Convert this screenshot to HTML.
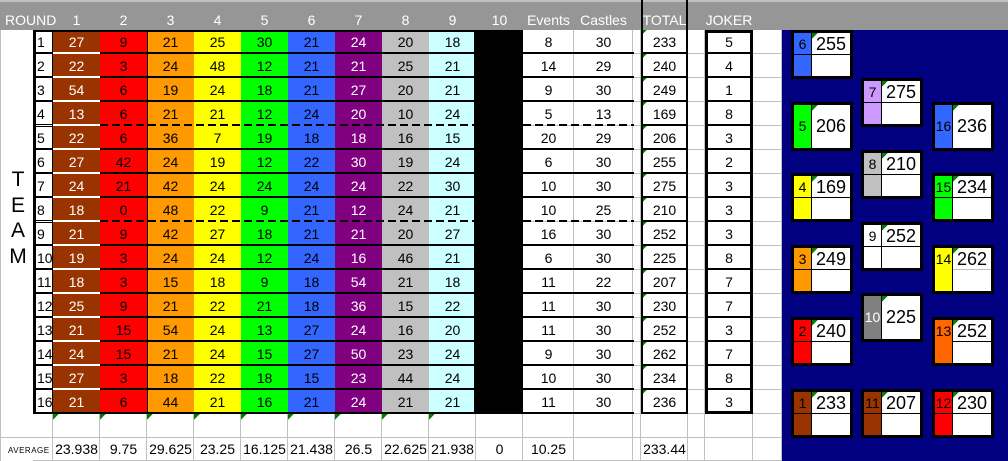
<!DOCTYPE html>
<html><head><meta charset="utf-8">
<style>
*{margin:0;padding:0;box-sizing:border-box}
body{width:1008px;height:461px;position:relative;overflow:hidden;background:#fff;font-family:"Liberation Sans",Arial,sans-serif}
.hd{position:absolute;left:0;top:0;width:1008px;height:30px;background:#969696;border-top:2px solid #c0c0c0}
.ht{position:absolute;top:11px;color:#fff;font-size:14px;text-align:center;line-height:18px}
table{position:absolute;left:33px;top:30px;border-collapse:collapse;table-layout:fixed;font-size:14px}
tr{height:24px}
td{padding:0;height:24px;max-height:24px;text-align:center;line-height:24px;overflow:hidden;white-space:nowrap;vertical-align:middle}
tr.r td:nth-child(1){background:#fff;text-align:left;padding-left:4px}
tr.r td:nth-child(2){background:#993300;color:#fff}
tr.r td:nth-child(3){background:#ff0000}
tr.r td:nth-child(4){background:#ff9900}
tr.r td:nth-child(5){background:#ffff00}
tr.r td:nth-child(6){background:#00ff00}
tr.r td:nth-child(7){background:#3366ff}
tr.r td:nth-child(8){background:#800080;color:#fff}
tr.r td:nth-child(9){background:#c0c0c0}
tr.r td:nth-child(10){background:#ccffff}
tr.r td:nth-child(11){background:#000}
tr.r td:nth-child(12),tr.r td:nth-child(13),tr.r td:nth-child(14),tr.r td:nth-child(16),tr.r td:nth-child(18){box-shadow:inset -1px 0 #c0c0c0,inset 0 -1px #c0c0c0}
tr.r td:nth-child(15){background:linear-gradient(135deg,#008000 0 4px,transparent 4px)}
tr.e td,tr.a td{box-shadow:inset -1px 0 #c0c0c0,inset 0 -1px #c0c0c0}
tr.e td.g{background:linear-gradient(135deg,#008000 0 4px,transparent 4px)}
tr.a{height:23px}
tr.a td{height:23px;line-height:23px}
.o{position:absolute}
.bx{position:absolute;width:62px;height:49px;border:3px solid #000;background:#fff;font-size:14px}
.bx .l{position:absolute;left:0;top:0;width:18px;height:43px;border-right:1px solid #000;text-align:center;line-height:22px}
.bx .v{position:absolute;left:18px;right:0;top:0;height:21px;line-height:23px;font-size:18px;text-align:center;background:linear-gradient(135deg,#008000 0 4px,transparent 4px)}
.bx .m{position:absolute;left:0;right:0;top:21px;height:1px;background:#000}
.bx.c .l{line-height:43px}
.bx.c .v{height:43px;line-height:43px}
</style></head><body>
<div class="hd"></div>
<div class="ht" style="left:5px">ROUND</div>
<div class="ht" style="left:53px;width:47px">1</div>
<div class="ht" style="left:100px;width:47px">2</div>
<div class="ht" style="left:147px;width:47px">3</div>
<div class="ht" style="left:194px;width:47px">4</div>
<div class="ht" style="left:241px;width:47px">5</div>
<div class="ht" style="left:288px;width:47px">6</div>
<div class="ht" style="left:335px;width:47px">7</div>
<div class="ht" style="left:382px;width:47px">8</div>
<div class="ht" style="left:429px;width:47px">9</div>
<div class="ht" style="left:476px;width:47px">10</div>
<div class="ht" style="left:523px;width:51px">Events</div>
<div class="ht" style="left:574px;width:59px">Castles</div>
<div class="ht" style="left:641px;width:47px">TOTAL</div>
<div class="ht" style="left:705px;width:48px">JOKER</div>

<div class="o" style="left:782px;top:30px;width:226px;height:431px;background:#000080"></div>
<div class="o" style="left:0;top:30px;width:1px;height:431px;background:#c0c0c0"></div>
<div class="o" style="left:0;top:437px;width:33px;height:1px;background:#c0c0c0"></div>

<table>
<colgroup><col style="width:20px"><col style="width:47px"><col style="width:47px"><col style="width:47px"><col style="width:47px"><col style="width:47px"><col style="width:47px"><col style="width:47px"><col style="width:47px"><col style="width:47px"><col style="width:47px"><col style="width:51px"><col style="width:59px"><col style="width:8px"><col style="width:47px"><col style="width:17px"><col style="width:48px"><col style="width:29px"></colgroup>
<tr class="r"><td>1</td><td>27</td><td>9</td><td>21</td><td>25</td><td>30</td><td>21</td><td>24</td><td>20</td><td>18</td><td></td><td>8</td><td>30</td><td></td><td>233</td><td></td><td>5</td><td></td></tr>
<tr class="r"><td>2</td><td>22</td><td>3</td><td>24</td><td>48</td><td>12</td><td>21</td><td>21</td><td>25</td><td>21</td><td></td><td>14</td><td>29</td><td></td><td>240</td><td></td><td>4</td><td></td></tr>
<tr class="r"><td>3</td><td>54</td><td>6</td><td>19</td><td>24</td><td>18</td><td>21</td><td>27</td><td>20</td><td>21</td><td></td><td>9</td><td>30</td><td></td><td>249</td><td></td><td>1</td><td></td></tr>
<tr class="r"><td>4</td><td>13</td><td>6</td><td>21</td><td>21</td><td>12</td><td>24</td><td>20</td><td>10</td><td>24</td><td></td><td>5</td><td>13</td><td></td><td>169</td><td></td><td>8</td><td></td></tr>
<tr class="r"><td>5</td><td>22</td><td>6</td><td>36</td><td>7</td><td>19</td><td>18</td><td>18</td><td>16</td><td>15</td><td></td><td>20</td><td>29</td><td></td><td>206</td><td></td><td>3</td><td></td></tr>
<tr class="r"><td>6</td><td>27</td><td>42</td><td>24</td><td>19</td><td>12</td><td>22</td><td>30</td><td>19</td><td>24</td><td></td><td>6</td><td>30</td><td></td><td>255</td><td></td><td>2</td><td></td></tr>
<tr class="r"><td>7</td><td>24</td><td>21</td><td>42</td><td>24</td><td>24</td><td>24</td><td>24</td><td>22</td><td>30</td><td></td><td>10</td><td>30</td><td></td><td>275</td><td></td><td>3</td><td></td></tr>
<tr class="r"><td>8</td><td>18</td><td>0</td><td>48</td><td>22</td><td>9</td><td>21</td><td>12</td><td>24</td><td>21</td><td></td><td>10</td><td>25</td><td></td><td>210</td><td></td><td>3</td><td></td></tr>
<tr class="r"><td>9</td><td>21</td><td>9</td><td>42</td><td>27</td><td>18</td><td>21</td><td>21</td><td>20</td><td>27</td><td></td><td>16</td><td>30</td><td></td><td>252</td><td></td><td>3</td><td></td></tr>
<tr class="r"><td>10</td><td>19</td><td>3</td><td>24</td><td>24</td><td>12</td><td>24</td><td>16</td><td>46</td><td>21</td><td></td><td>6</td><td>30</td><td></td><td>225</td><td></td><td>8</td><td></td></tr>
<tr class="r"><td>11</td><td>18</td><td>3</td><td>15</td><td>18</td><td>9</td><td>18</td><td>54</td><td>21</td><td>18</td><td></td><td>11</td><td>22</td><td></td><td>207</td><td></td><td>7</td><td></td></tr>
<tr class="r"><td>12</td><td>25</td><td>9</td><td>21</td><td>22</td><td>21</td><td>18</td><td>36</td><td>15</td><td>22</td><td></td><td>11</td><td>30</td><td></td><td>230</td><td></td><td>7</td><td></td></tr>
<tr class="r"><td>13</td><td>21</td><td>15</td><td>54</td><td>24</td><td>13</td><td>27</td><td>24</td><td>16</td><td>20</td><td></td><td>11</td><td>30</td><td></td><td>252</td><td></td><td>3</td><td></td></tr>
<tr class="r"><td>14</td><td>24</td><td>15</td><td>21</td><td>24</td><td>15</td><td>27</td><td>50</td><td>23</td><td>24</td><td></td><td>9</td><td>30</td><td></td><td>262</td><td></td><td>7</td><td></td></tr>
<tr class="r"><td>15</td><td>27</td><td>3</td><td>18</td><td>22</td><td>18</td><td>15</td><td>23</td><td>44</td><td>24</td><td></td><td>10</td><td>30</td><td></td><td>234</td><td></td><td>8</td><td></td></tr>
<tr class="r"><td>16</td><td>21</td><td>6</td><td>44</td><td>21</td><td>16</td><td>21</td><td>24</td><td>21</td><td>21</td><td></td><td>11</td><td>30</td><td></td><td>236</td><td></td><td>3</td><td></td></tr>
<tr class="e"><td></td><td class="g"></td><td class="g"></td><td class="g"></td><td class="g"></td><td class="g"></td><td class="g"></td><td class="g"></td><td class="g"></td><td class="g"></td><td></td><td></td><td></td><td></td><td></td><td></td><td></td><td></td></tr>
<tr class="a"><td></td><td>23.938</td><td>9.75</td><td>29.625</td><td>23.25</td><td>16.125</td><td>21.438</td><td>26.5</td><td>22.625</td><td>21.938</td><td>0</td><td>10.25</td><td></td><td></td><td>233.44</td><td></td><td></td><td></td></tr>
</table>

<div class="o" style="left:8px;top:446px;font-size:8px;letter-spacing:0.5px">AVERAGE</div>

<div class="o" style="left:33px;top:30px;width:601px;height:94px;background:repeating-linear-gradient(to bottom,transparent 0 22px,#000 22px 24px)"></div>
<div class="o" style="left:33px;top:126px;width:601px;height:94px;background:repeating-linear-gradient(to bottom,transparent 0 22px,#000 22px 24px)"></div>
<div class="o" style="left:33px;top:222px;width:601px;height:192px;background:repeating-linear-gradient(to bottom,transparent 0 22px,#000 22px 24px)"></div>
<div class="o" style="left:476px;top:30px;width:47px;height:384px;background:#000"></div>
<div class="o" style="left:53px;top:30px;width:47px;height:382px;background:repeating-linear-gradient(to bottom,transparent 0 22px,#fff 22px 24px)"></div>
<div class="o" style="left:33px;top:124px;width:20px;height:1px;background:#000"></div>
<div class="o" style="left:33px;top:126px;width:20px;height:1px;background:#000"></div>
<div class="o" style="left:33px;top:220px;width:20px;height:1px;background:#000"></div>
<div class="o" style="left:33px;top:222px;width:20px;height:1px;background:#000"></div>
<div class="o" style="left:100px;top:124px;width:376px;height:2px;background:repeating-linear-gradient(to right,#000 0 8px,transparent 8px 12px)"></div>
<div class="o" style="left:523px;top:124px;width:111px;height:2px;background:repeating-linear-gradient(to right,#000 0 8px,transparent 8px 12px)"></div>
<div class="o" style="left:100px;top:220px;width:376px;height:2px;background:repeating-linear-gradient(to right,#000 0 8px,transparent 8px 12px)"></div>
<div class="o" style="left:523px;top:220px;width:111px;height:2px;background:repeating-linear-gradient(to right,#000 0 8px,transparent 8px 12px)"></div>
<div class="o" style="left:33px;top:30px;width:443px;height:384px;border:2px solid #000;border-left-width:3px"></div>
<div class="o" style="left:52px;top:30px;width:1px;height:384px;background:#000"></div>
<div class="o" style="left:147px;top:30px;width:1px;height:384px;background:#000"></div>
<div class="o" style="left:641px;top:30px;width:47px;height:384px;background:repeating-linear-gradient(to bottom,transparent 0 22px,#000 22px 24px)"></div>
<div class="o" style="left:641px;top:0;width:47px;height:414px;border-left:2px solid #000;border-right:2px solid #000"></div>
<div class="o" style="left:705px;top:30px;width:48px;height:384px;background:repeating-linear-gradient(to bottom,transparent 0 22px,#000 22px 24px)"></div>
<div class="o" style="left:705px;top:30px;width:48px;height:384px;border:3px solid #000"></div>

<div class="o" style="left:7px;top:168px;width:22px;text-align:center;font-size:21px;line-height:24px">T</div>
<div class="o" style="left:7px;top:194px;width:22px;text-align:center;font-size:21px;line-height:24px">E</div>
<div class="o" style="left:7px;top:219px;width:22px;text-align:center;font-size:21px;line-height:24px">A</div>
<div class="o" style="left:7px;top:245px;width:22px;text-align:center;font-size:21px;line-height:24px">M</div>

<div class="bx" style="left:791px;top:30px"><div class="l" style="background:#3366ff">6</div><div class="v">255</div><div class="m"></div></div>
<div class="bx c" style="left:791px;top:102px"><div class="l" style="background:#00ff00">5</div><div class="v">206</div></div>
<div class="bx" style="left:791px;top:173px"><div class="l" style="background:#ffff00">4</div><div class="v">169</div><div class="m"></div></div>
<div class="bx" style="left:791px;top:245px"><div class="l" style="background:#ff9900">3</div><div class="v">249</div><div class="m"></div></div>
<div class="bx" style="left:791px;top:317px"><div class="l" style="background:#ff0000">2</div><div class="v">240</div><div class="m"></div></div>
<div class="bx" style="left:791px;top:389px"><div class="l" style="background:#993300">1</div><div class="v">233</div><div class="m"></div></div>
<div class="bx" style="left:861px;top:78px"><div class="l" style="background:#cc99ff">7</div><div class="v">275</div><div class="m"></div></div>
<div class="bx" style="left:861px;top:150px"><div class="l" style="background:#c0c0c0">8</div><div class="v">210</div><div class="m"></div></div>
<div class="bx" style="left:861px;top:222px"><div class="l" style="background:#fff">9</div><div class="v">252</div><div class="m"></div></div>
<div class="bx c" style="left:861px;top:293px"><div class="l" style="background:#808080;color:#fff">10</div><div class="v">225</div></div>
<div class="bx" style="left:861px;top:389px"><div class="l" style="background:#993300">11</div><div class="v">207</div><div class="m"></div></div>
<div class="bx c" style="left:932px;top:102px"><div class="l" style="background:#3366ff">16</div><div class="v">236</div></div>
<div class="bx" style="left:932px;top:173px"><div class="l" style="background:#00ff00">15</div><div class="v">234</div><div class="m"></div></div>
<div class="bx" style="left:932px;top:245px"><div class="l" style="background:#ffff00">14</div><div class="v">262</div><div class="m" style="left:18px;background:#c0c0c0"></div></div>
<div class="bx" style="left:932px;top:317px"><div class="l" style="background:#ff6600">13</div><div class="v">252</div><div class="m" style="left:18px"></div></div>
<div class="bx" style="left:932px;top:389px"><div class="l" style="background:#ff0000">12</div><div class="v">230</div><div class="m"></div></div>
</body></html>
